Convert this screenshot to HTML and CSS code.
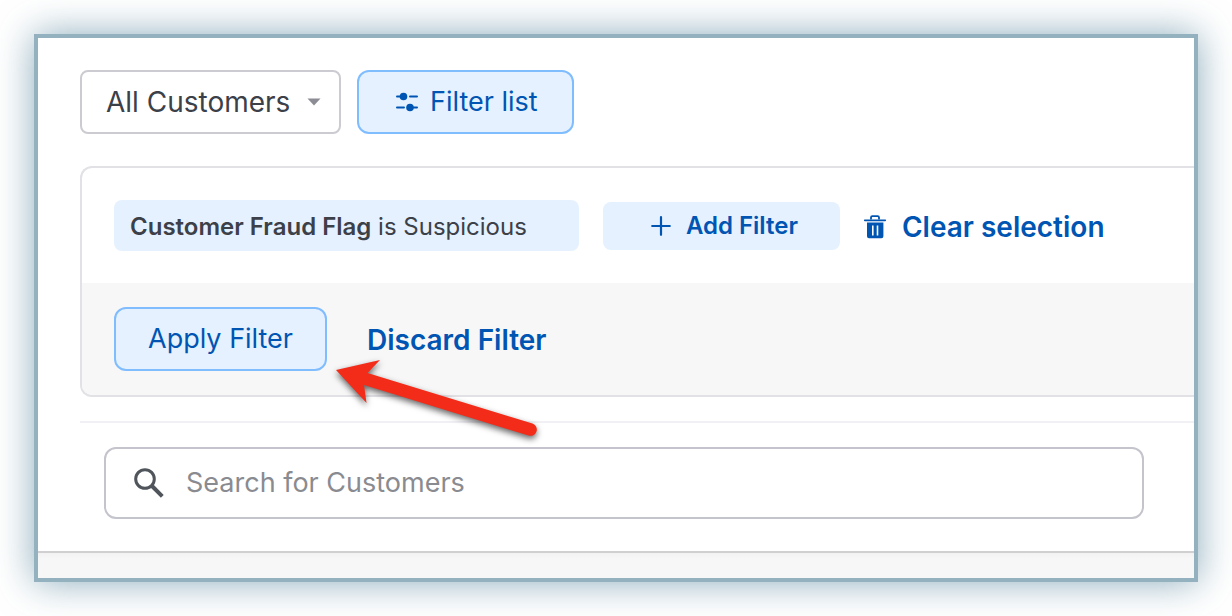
FILE: index.html
```html
<!DOCTYPE html>
<html lang="en">
<head>
    <meta charset="UTF-8">
    <meta name="viewport" content="width=device-width, initial-scale=1.0">
    <title>Customers</title>
    <link rel="stylesheet" href="styles.css">
</head>
<body>
    <main class="frame">
        <div class="content">
            <div class="toolbar">
                <div class="select-wrap">
                    <select class="view-select" aria-label="Customer view">
                        <option>All Customers</option>
                    </select>
                    <svg class="caret" width="14" height="8" viewBox="0 0 14 8" aria-hidden="true">
                        <path d="M0.5 0.5h13L7 7.5z" fill="#8c8c94"/>
                    </svg>
                </div>
                <button type="button" class="btn btn-filter">
                    <svg width="22" height="20" viewBox="0 0 22 20" fill="none" stroke="#0055b3" stroke-width="2" stroke-linecap="round" aria-hidden="true">
                        <path d="M1 4.5h6M14 4.5h7M1 15.5h7M14 15.5h7"/>
                        <circle cx="7.5" cy="4.5" r="3.8" fill="#0055b3" stroke="none"/>
                        <circle cx="14" cy="15.5" r="3.8" fill="#0055b3" stroke="none"/>
                    </svg>
                    Filter list
                </button>
            </div>

            <section class="panel">
                <div class="conditions">
                    <div class="chip"><strong>Customer Fraud Flag</strong> is Suspicious</div>
                    <button type="button" class="add-filter">
                        <svg width="20" height="20" viewBox="0 0 20 20" stroke="#0055b3" stroke-width="2.2" stroke-linecap="round" aria-hidden="true">
                            <path d="M10 1.2v17.6M1.2 10h17.6"/>
                        </svg>
                        Add Filter
                    </button>
                    <button type="button" class="btn-link">
                        <svg width="22" height="24" viewBox="0 0 22 24" fill="none" aria-hidden="true">
                            <path d="M7 4.5V2.6Q7 1.2 8.4 1.2h5.2Q15 1.2 15 2.6v1.9" stroke="#0055b3" stroke-width="1.8"/>
                            <path d="M0.8 5.3h20.4" stroke="#0055b3" stroke-width="1.8" stroke-linecap="round"/>
                            <path fill="#0055b3" fill-rule="evenodd" d="M3 7.500h16.400v13.700q0 2-2 2H5q-2 0-2-2zM8 10.500v10h1.600v-10zM12.700 10.500v10h1.600v-10z"/>
                        </svg>
                        Clear selection
                    </button>
                </div>
                <div class="panel-actions">
                    <button type="button" class="btn">Apply Filter</button>
                    <button type="button" class="btn-link">Discard Filter</button>
                    <!-- pointer to the Apply button -->
                    <svg class="arrow" width="216" height="92" viewBox="0 0 216 92" aria-hidden="true">
                        <path fill="#f32c1a" d="M6 10L50 0L37.500 13L202.500 63.500A6.300 6.300 0 0 1 198.500 75.500L34 25L36.500 43z"/>
                    </svg>
                </div>
            </section>

            <div class="search-area">
                <label class="search">
                    <svg width="30" height="30" viewBox="0 0 30 30" fill="none" stroke="#50555c" aria-hidden="true">
                        <circle cx="11" cy="11" r="9.300" stroke-width="3"/>
                        <path d="M18 18l10.300 10.300" stroke-width="4"/>
                    </svg>
                    <input type="text" placeholder="Search for Customers" aria-label="Search for Customers">
                </label>
            </div>
        </div>
        <div class="bottom-strip"></div>
    </main>
</body>
</html>
```

FILE: styles.css
```css
* {
    margin: 0;
    padding: 0;
    box-sizing: border-box;
}

body {
    font-family: Inter, 'Liberation Sans', sans-serif;
    font-size: 28px;
    line-height: 34px;
    color: #3c4048;
    background: #fff;
    padding: 34px;
}

button,
select,
input {
    font: inherit;
}

.frame {
    border: 4px solid #93b1bf;
    box-shadow: 0 0 36px rgba(110, 150, 170, 0.8);
    background: #fff;
    overflow: hidden;
}

.content {
    padding: 32px 0 32px 42px;
    border-bottom: 2px solid #d0d0d2;
}

.toolbar {
    display: flex;
    gap: 16px;
    margin-bottom: 32px;
}

.select-wrap {
    position: relative;
}

.view-select {
    appearance: none;
    height: 64px;
    padding: 0 48px 0 24px;
    border: 2px solid #cbcbd1;
    border-radius: 8px;
    background: #fff;
    color: #3c4048;
}

.caret {
    position: absolute;
    right: 20px;
    top: 28px;
    pointer-events: none;
}

.btn {
    display: flex;
    align-items: center;
    gap: 12px;
    height: 64px;
    padding: 0 32px;
    border: 2px solid #80bdff;
    border-radius: 12px;
    background: #e5f1ff;
    color: #0055b3;
    font-size: 27px;
    cursor: pointer;
}

.btn-filter {
    padding: 0 34px 0 37px;
}

.panel {
    border: 2px solid #e1e1e6;
    border-right: none;
    border-radius: 12px 0 0 12px;
}

.conditions {
    display: flex;
    align-items: center;
    gap: 24px;
    padding: 32px;
}

.chip {
    padding: 10px 52px 7px 16px;
    border-radius: 8px;
    background: #e5f1ff;
    font-size: 24px;
}

.chip strong {
    font-weight: 600;
}

.add-filter {
    display: flex;
    align-items: center;
    gap: 15px;
    height: 48px;
    padding: 0 42px 0 48px;
    border: none;
    border-radius: 8px;
    background: #e5f1ff;
    color: #0055b3;
    font-size: 24px;
    font-weight: 600;
    cursor: pointer;
}

.btn-link {
    display: flex;
    align-items: center;
    gap: 16px;
    padding-top: 2px;
    border: none;
    background: none;
    color: #0055b3;
    font-weight: 600;
    cursor: pointer;
}

.panel-actions {
    position: relative;
    display: flex;
    align-items: center;
    gap: 40px;
    padding: 24px 32px;
    border-bottom-left-radius: 10px;
    background: #f7f7f7;
}

.arrow {
    position: absolute;
    left: 248px;
    top: 77px;
    overflow: visible;
    filter: drop-shadow(0 3px 3px rgba(0, 0, 0, 0.6));
}

.search-area {
    margin-top: 24px;
    padding: 24px 50px 0 24px;
    border-top: 2px solid #f0f0f5;
}

.search {
    display: flex;
    align-items: center;
    gap: 22px;
    height: 72px;
    padding: 0 28px;
    border: 2px solid #c4c4cc;
    border-radius: 12px;
}

.search input {
    flex: 1;
    min-width: 0;
    border: none;
    outline: none;
    background: none;
    color: #3c4048;
    font-size: 27px;
}

.search input::placeholder {
    color: #8a8b90;
    opacity: 1;
}

.bottom-strip {
    height: 25px;
    background: linear-gradient(#f2f2f2, #f7f7f7 6px);
}
```
